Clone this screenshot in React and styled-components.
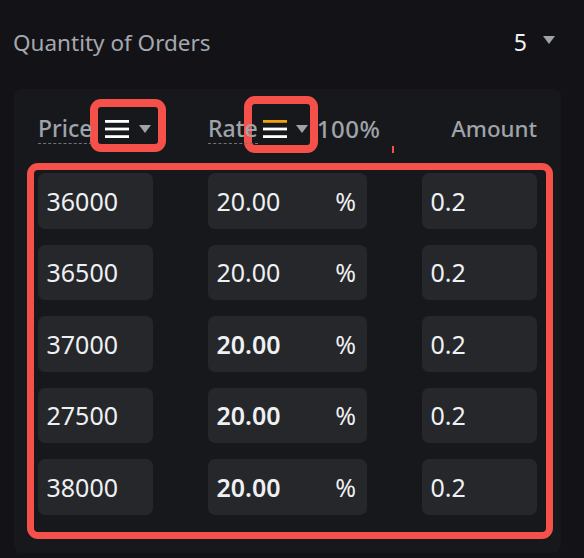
import React from "react";
import styled, { createGlobalStyle } from "styled-components";

const GlobalStyle = createGlobalStyle`
  html, body { margin: 0; padding: 0; background: #131317; }
  body { font-family: "Noto Sans", "DejaVu Sans", sans-serif; }
`;

const RED = "#f6504b";

const Page = styled.div`
  width: 584px;
  height: 558px;
  background: #131317;
  box-sizing: border-box;
  overflow: hidden;
`;

const TitleRow = styled.div`
  height: 89px;
  box-sizing: border-box;
  padding: 0 29px 5px 13px;
  display: flex;
  align-items: center;
  justify-content: space-between;
`;

const Title = styled.span`
  font-size: 22.5px;
  color: #a4a8af;
`;

const Select = styled.div`
  display: flex;
  align-items: center;
  gap: 16px;
  color: #f1f2f4;
  font-size: 23px;
`;

const Caret = styled.span`
  width: 0;
  height: 0;
  border-left: 6px solid transparent;
  border-right: 6px solid transparent;
  border-top: 8px solid ${(p) => p.$color || "#9ea2a9"};
  margin-top: ${(p) => p.$mt || 0}px;
`;

const Panel = styled.div`
  margin-left: 14px;
  width: 547px;
  background: #17181c;
  border-radius: 8px;
  padding-bottom: 14px;
`;

const Header = styled.div`
  position: relative;
  height: 74px;
  box-sizing: border-box;
  padding: 6px 24px 0 24px;
  display: flex;
  align-items: center;
`;

const HeadGroup = styled.div`
  display: flex;
  align-items: center;
  width: ${(p) => (p.$w ? `${p.$w}px` : "auto")};
  margin-left: ${(p) => (p.$auto ? "auto" : "0")};
`;

const Label = styled.span`
  position: relative;
  z-index: 2;
  font-size: ${(p) => p.$size || 23}px;
  letter-spacing: ${(p) => p.$ls || 0}px;
  color: #9fa3aa;
  font-weight: 500;
  line-height: 28px;
  padding-bottom: 1px;
  border-bottom: ${(p) => (p.$dotted ? "1.5px dashed #6f737a" : "none")};
  margin-left: ${(p) => p.$ml || 0}px;
`;

const IconGroup = styled.div`
  position: relative;
  display: flex;
  align-items: center;
  gap: ${(p) => p.$gap}px;
  margin-left: ${(p) => p.$ml}px;
  &::before {
    content: "";
    position: absolute;
    left: ${(p) => p.$box[0]}px;
    top: ${(p) => p.$box[1]}px;
    right: ${(p) => p.$box[2]}px;
    bottom: ${(p) => p.$box[3]}px;
    border: 8px solid ${RED};
    border-radius: 11px;
    pointer-events: none;
  }
`;

const Tick = styled.span`
  position: absolute;
  left: 378px;
  top: 57px;
  width: 2px;
  height: 7px;
  background: ${RED};
`;

const Grid = styled.div`
  margin: 0 8px 0 13px;
  border: 7px solid ${RED};
  border-radius: 11px;
  padding: 3px 9px 17px 4px;
  display: flex;
  flex-direction: column;
  gap: 16px;
`;

const Row = styled.div`
  display: grid;
  grid-template-columns: 115px 159px 115px;
  column-gap: 55px;
`;

const Cell = styled.div`
  height: 55.5px;
  border-radius: 7px;
  background: #25272b;
  display: flex;
  align-items: center;
  justify-content: space-between;
  padding: 0 11px 0 8.5px;
  box-sizing: border-box;
  font-size: 25px;
  color: #eef0f2;
  font-weight: ${(p) => (p.$bold ? 600 : 400)};
`;

const Unit = styled.span`
  font-weight: 400;
  font-size: 25px;
`;

function Hamburger({ top = "#ffffff" }) {
  return (
    <svg width="24" height="18" viewBox="0 0 24 18">
      <rect x="0" y="0" width="24" height="2.8" fill={top} />
      <rect x="0" y="7.6" width="24" height="2.8" fill="#ffffff" />
      <rect x="0" y="15.2" width="24" height="2.8" fill="#ffffff" />
    </svg>
  );
}

const rows = [
  ["36000", "20.00", "0.2", false],
  ["36500", "20.00", "0.2", false],
  ["37000", "20.00", "0.2", true],
  ["27500", "20.00", "0.2", true],
  ["38000", "20.00", "0.2", true],
];

export default function App() {
  return (
    <>
      <GlobalStyle />
      <Page>
        <TitleRow>
          <Title>Quantity of Orders</Title>
          <Select>
            5
            <Caret $mt={-4} />
          </Select>
        </TitleRow>
        <Panel>
          <Header>
            <HeadGroup $w={170}>
              <Label $dotted>Price</Label>
              <IconGroup $gap={10} $ml={13} $box={[-15, -21, -15, -14]}>
                <Hamburger />
                <Caret />
              </IconGroup>
            </HeadGroup>
            <HeadGroup>
              <Label $dotted>Rate</Label>
              <IconGroup $gap={9} $ml={5} $box={[-19, -24, -10, -15]}>
                <Hamburger top="#f0a20c" />
                <Caret />
              </IconGroup>
              <Label $ml={9} $size={24} $ls={0.5}>100%</Label>
            </HeadGroup>
            <HeadGroup $auto>
              <Label $size={22.3}>Amount</Label>
            </HeadGroup>
            <Tick />
          </Header>
          <Grid>
            {rows.map(([p, r, a, b], i) => (
              <Row key={i}>
                <Cell>{p}</Cell>
                <Cell $bold={b}>
                  {r}
                  <Unit>%</Unit>
                </Cell>
                <Cell>{a}</Cell>
              </Row>
            ))}
          </Grid>
        </Panel>
      </Page>
    </>
  );
}
